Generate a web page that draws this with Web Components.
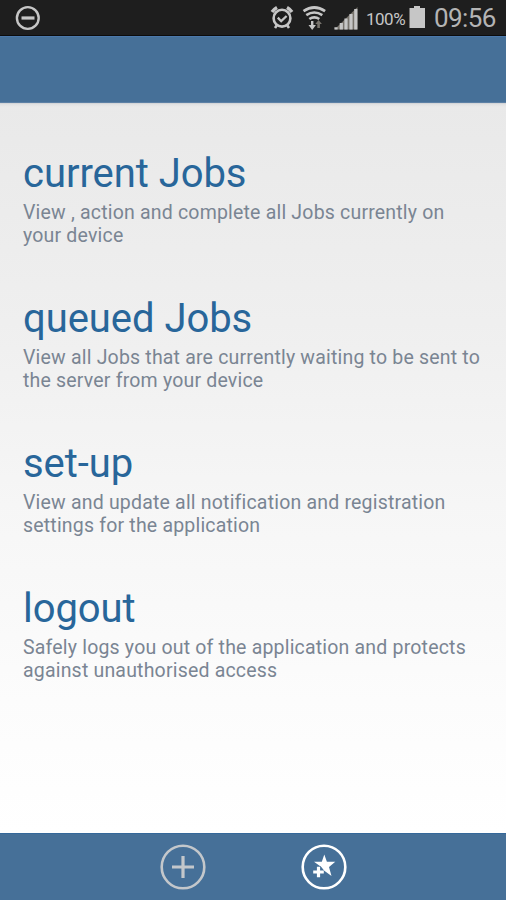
<!DOCTYPE html>
<html lang="en">
<head>
<meta charset="utf-8">
<meta name="viewport" content="width=device-width, initial-scale=1">
<title>Jobs</title>
<style>
  html, body {
    height: 100%;
    margin: 0;
  }
  body {
    font-family: Roboto, sans-serif;
    overflow: hidden;
  }
</style>
</head>
<body>
<jobs-app>
  <status-bar slot="status" battery="100%" time="09:56"></status-bar>
  <menu-item heading="current Jobs">View , action and complete all Jobs currently on<br>your device</menu-item>
  <menu-item heading="queued Jobs">View all Jobs that are currently waiting to be sent to<br>the server from your device</menu-item>
  <menu-item heading="set-up">View and update all notification and registration<br>settings for the application</menu-item>
  <menu-item heading="logout">Safely logs you out of the application and protects<br>against unauthorised access</menu-item>
  <round-button slot="actions" icon="add" label="Add" style="color: #c3c7cb"></round-button>
  <round-button slot="actions" icon="favourite" label="Add favourite" style="color: #fff"></round-button>
</jobs-app>

<script>
class JobsApp extends HTMLElement {
  constructor() {
    super();
    this.attachShadow({ mode: 'open' });
    this.shadowRoot.innerHTML = `
      <style>
        :host {
          display: flex;
          flex-direction: column;
          height: 900px;
        }
        header {
          box-sizing: border-box;
          height: 67px;
          background: #467098;
          border-top: 1px solid #4b78ab;
          border-bottom: 1px solid #5c80a5;
        }
        main {
          box-sizing: border-box;
          flex: 1;
          padding: 47px 23px 0;
          background: linear-gradient(#c9cbce 0, #dfe0e1 1px, rgba(232, 232, 232, 0) 4px),
                      linear-gradient(#e9e9e9, #efefef 30%, #f6f6f6 55%, #fcfcfc 82%, #fff);
        }
        footer {
          box-sizing: border-box;
          display: flex;
          gap: 95px;
          height: 67px;
          padding: 10px 0 0 160px;
          background: #467098;
          border-top: 1px solid #35689a;
        }
      </style>
      <slot name="status"></slot>
      <header></header>
      <main><slot></slot></main>
      <footer><slot name="actions"></slot></footer>
    `;
  }
}

class StatusBar extends HTMLElement {
  constructor() {
    super();
    this.attachShadow({ mode: 'open' });
  }

  connectedCallback() {
    this.shadowRoot.innerHTML = `
      <style>
        :host {
          box-sizing: border-box;
          display: flex;
          height: 36px;
          background: #1e1e1e;
          border-bottom: 1px solid #0c0c0c;
          color: #c6c6c6;
        }
        svg {
          display: block;
          flex: none;
        }
        .spacer {
          flex: 1;
        }
        .battery {
          width: 42px;
          margin-left: 6px;
          font-size: 17px;
          line-height: 38px;
          letter-spacing: -0.5px;
          white-space: nowrap;
        }
        .time {
          width: 62px;
          margin: 0 10px 0 8px;
          color: #b4b4b4;
          font-size: 26px;
          line-height: 36px;
          letter-spacing: -0.6px;
          white-space: nowrap;
        }
      </style>
      <svg width="46" height="35" viewBox="0 0 46 35" fill="none" stroke="currentColor">
        <circle cx="27.8" cy="18" r="10.9" stroke-width="2.4"/>
        <path d="M21.5 18h13" stroke-width="3.2"/>
      </svg>
      <div class="spacer"></div>
      <svg width="90" height="35" viewBox="270 0 90 35" fill="none" stroke="currentColor">
        <circle cx="282" cy="18.2" r="8.4" stroke-width="2.6"/>
        <path d="M277.8 17.6l3.4 3.6 5.4-5.2" stroke-width="2.3"/>
        <path d="M272 12a15 15 0 0 1 5-4.5M292 12a15 15 0 0 0-5-4.5" stroke-width="3.4"/>
        <path d="M277 25l-2 3M287 25l2 3" stroke-width="2.6"/>
        <path d="M303.5 11.2q10.800-7.400 21.600 0M306.300 15.200q8-5.400 16 0M309.300 19q5-3.400 10 0" stroke-width="2.7"/>
        <path d="M312.200 21v7" stroke-width="2.4"/>
        <path d="M308.500 25h7.400l-3.700 5z" fill="currentColor" stroke="none"/>
        <path d="M317.300 28v-4h-2l3.300-4 3.300 4h-2v4z" fill="#77736c" stroke="none"/>
        <path d="M334.500 29.500L357.500 7v22.500z" fill="#77736c" stroke="none"/>
        <path d="M336 29.500v-2.200M341.300 29.500v-6.500M346 29.500V18.500M351 29.500V14M355.800 29.500V9" stroke-width="3.2"/>
      </svg>
      <div class="battery">${this.getAttribute('battery')}</div>
      <svg width="18" height="35" viewBox="409 0 18 35" fill="currentColor">
        <path d="M415 6h6v2h5v20h-15.500V8h4.500z"/>
      </svg>
      <div class="time">${this.getAttribute('time')}</div>
    `;
  }
}

class MenuItem extends HTMLElement {
  constructor() {
    super();
    this.attachShadow({ mode: 'open' });
  }

  connectedCallback() {
    this.shadowRoot.innerHTML = `
      <style>
        :host {
          display: block;
          height: 145px;
        }
        h2 {
          margin: 0;
          color: #28669a;
          font-size: 40px;
          font-weight: 400;
          line-height: 48px;
          letter-spacing: -0.05px;
          white-space: nowrap;
        }
        p {
          margin: 3px 0 0;
          color: #7a8593;
          font-size: 19.5px;
          line-height: 23px;
          letter-spacing: 0.19px;
          white-space: nowrap;
        }
      </style>
      <h2>${this.getAttribute('heading')}</h2>
      <p><slot></slot></p>
    `;
  }
}

const icons = {
  add: '<path d="M23 12v22M12 23h22" stroke-width="3.2"/>',
  favourite: `
    <path d="M23.300 10.500l2.600 7.200h8.400l-6.300 5.300 2.500 9-7.200-5.200-3-3.800-7.300-5.300h7.800z" fill="currentColor" stroke="none"/>
    <path d="M17.500 22.500v11M12 28h9" stroke="#467098" stroke-width="4.800"/>
    <path d="M17.500 22.700v10.600M12.200 28h10.600" stroke-width="3.200"/>`
};

class RoundButton extends HTMLElement {
  constructor() {
    super();
    this.attachShadow({ mode: 'open' });
  }

  connectedCallback() {
    this.shadowRoot.innerHTML = `
      <style>
        :host {
          display: block;
          width: 46px;
          height: 46px;
        }
        button {
          display: block;
          padding: 0;
          border: 0;
          background: none;
          color: inherit;
        }
        svg {
          display: block;
        }
      </style>
      <button aria-label="${this.getAttribute('label')}">
        <svg width="46" height="46" viewBox="0 0 46 46" fill="none" stroke="currentColor">
          <circle cx="23" cy="23" r="21.3" stroke-width="2.6"/>
          ${icons[this.getAttribute('icon')]}
        </svg>
      </button>
    `;
  }
}

customElements.define('jobs-app', JobsApp);
customElements.define('status-bar', StatusBar);
customElements.define('menu-item', MenuItem);
customElements.define('round-button', RoundButton);
</script>
</body>
</html>
